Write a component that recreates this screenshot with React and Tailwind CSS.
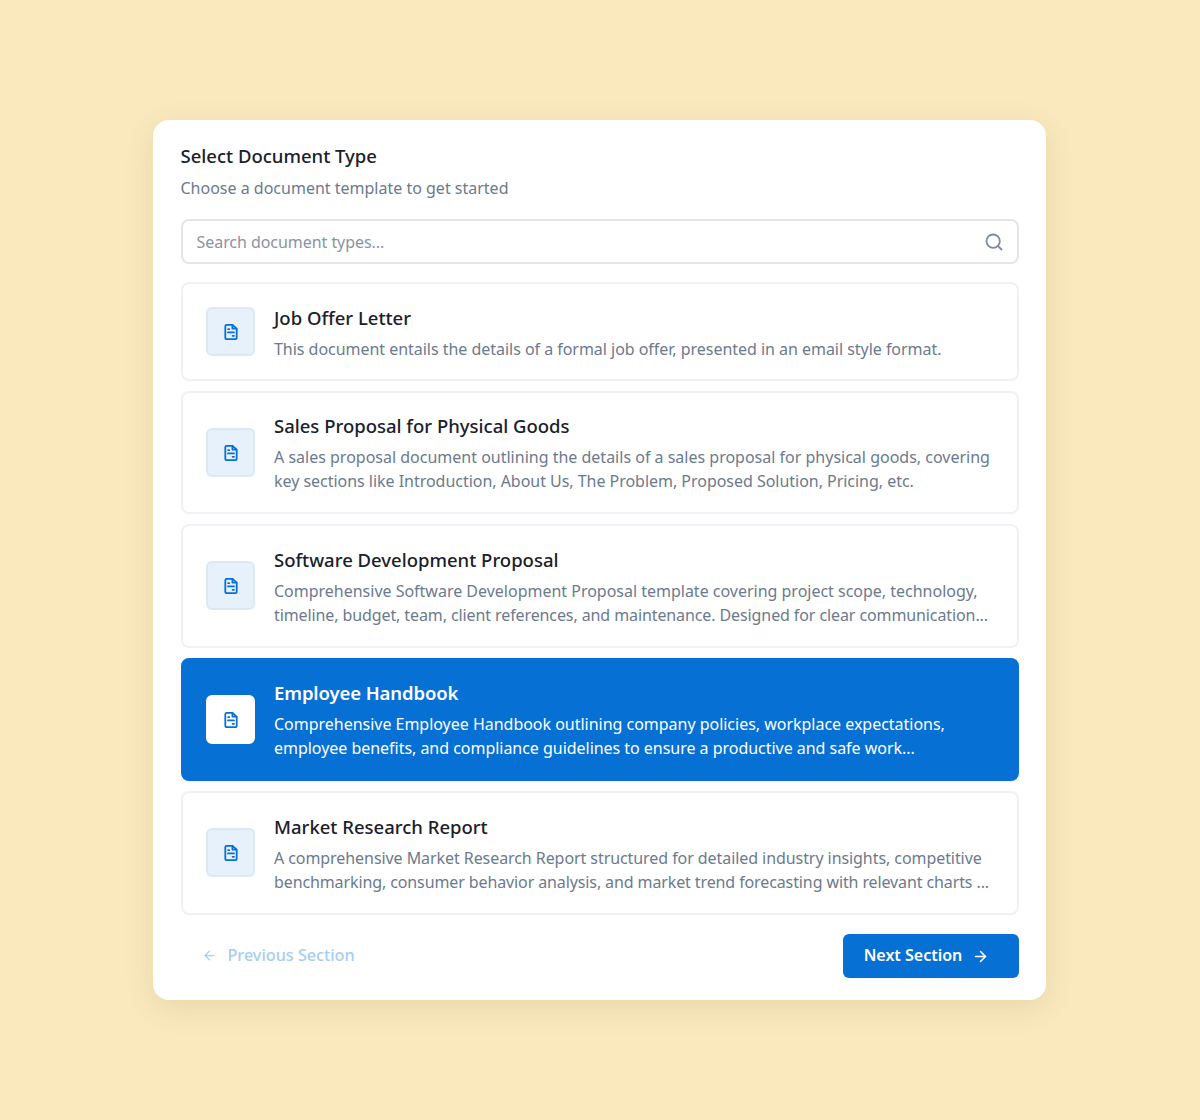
import React from "react";
import { Search, ArrowLeft, ArrowRight } from "lucide-react";

const items = [
  { t: "Job Offer Letter", d: [["This document entails the details of a formal job offer, presented in an email style format.", "tracking-[-0.03px]"]], h: "h-[99px]", nudge: "pt-[3px]" },
  { t: "Sales Proposal for Physical Goods", d: [["A sales proposal document outlining the details of a sales proposal for physical goods, covering", ""], ["key sections like Introduction, About Us, The Problem, Proposed Solution, Pricing, etc.", "tracking-[-0.03px]"]], h: "h-[123.5px]", nudge: "pt-[1px]" },
  { t: "Software Development Proposal", d: [["Comprehensive Software Development Proposal template covering project scope, technology,", "tracking-[-0.01px]"], ["timeline, budget, team, client references, and maintenance. Designed for clear communication...", "tracking-[-0.1px]"]], h: "h-[123.5px]", nudge: "pt-[2px]" },
  { t: "Employee Handbook", d: [["Comprehensive Employee Handbook outlining company policies, workplace expectations,", "tracking-[-0.02px]"], ["employee benefits, and compliance guidelines to ensure a productive and safe work...", "tracking-[-0.03px]"]], h: "h-[123.5px]", nudge: "pt-[2px]", active: true },
  { t: "Market Research Report", d: [["A comprehensive Market Research Report structured for detailed industry insights, competitive", "tracking-[-0.07px]"], ["benchmarking, consumer behavior analysis, and market trend forecasting with relevant charts ...", "tracking-[-0.11px]"]], h: "h-[123.5px]", nudge: "pt-[2px]" },
];

function DocIcon() {
  return (
    <svg className="ml-[2px] mt-[1px]" width="18" height="18" viewBox="0 0 18 18" fill="none" stroke="#0670d4" strokeWidth="1.8" strokeLinecap="round" strokeLinejoin="round">
      <path d="M10.5 1.8H4.8A1.5 1.5 0 0 0 3.3 3.3v11.4a1.5 1.5 0 0 0 1.5 1.5h8.4a1.5 1.5 0 0 0 1.5-1.5V5.6z" />
      <path d="M10.4 2v3.6h4" />
      <path d="M6.2 6.2h1" />
      <path d="M6 9.4h6" />
      <path d="M10.6 12.8h1.4" />
    </svg>
  );
}

function Row({ t, d, h, active, nudge }) {
  return (
    <div className={`${h} flex items-center rounded-[8px] border-2 pl-[23px] pr-[20px] ${active ? "bg-[#0670d4] border-[#0670d4]" : "bg-white border-[#f0f1f5]"}`}>
      <div className={`w-[49px] h-[49px] shrink-0 flex items-center justify-center rounded-[6px] border-2 ${active ? "bg-white border-white" : "bg-[#e6f1fb] border-[#dce8f4]"}`}>
        <DocIcon />
      </div>
      <div className={`ml-[19.5px] min-w-0 ${nudge}`}>
        <div className={`text-[18.5px] leading-[26px] whitespace-nowrap ${active ? "text-white font-semibold tracking-[-0.1px]" : "text-[#1a202c] font-medium"}`}>{t}</div>
        <div className={`mt-[6px] text-[16px] leading-[24px] whitespace-nowrap ${active ? "text-white" : "text-[#6c7a8e]"}`}>
          {d.map(([l, tr]) => <div key={l} className={tr}>{l}</div>)}
        </div>
      </div>
    </div>
  );
}

export default function App() {
  return (
    <div className="min-h-[1120px] bg-[#f9e9bd] flex items-start justify-center pt-[120px] pr-[2px] [font-family:'Noto_Sans',sans-serif]">
      <div className="w-[893px] h-[880px] bg-white rounded-[16px] shadow-[0_8px_30px_rgba(120,90,30,0.12)] pl-[28px] pr-[27px] pt-[22px]">
        <h1 className="text-[18.5px] leading-[28px] font-medium text-[#1a202c]">Select Document Type</h1>
        <p className="mt-[6px] text-[16px] leading-[24px] text-[#6c7a8e]">Choose a document template to get started</p>
        <div className="mt-[19px] h-[45px] flex items-center justify-between rounded-[8px] border-2 border-[#e2e6ec] pl-[14px] pr-[13px]">
          <span className="text-[16px] tracking-[-0.05px] text-[#8a93a3]">Search document types...</span>
          <Search size={20} strokeWidth={2.2} className="text-[#7d8ba1]" />
        </div>
        <div className="mt-[17.5px] flex flex-col gap-[10px]">
          {items.map((i) => <Row key={i.t} {...i} />)}
        </div>
        <div className="mt-[19.5px] flex items-center justify-between">
          <div className="flex items-center pl-[21px] text-[#a5cdf2]">
            <ArrowLeft size={15} strokeWidth={2} />
            <span className="ml-[11px] pb-[2px] text-[16.2px] font-medium">Previous Section</span>
          </div>
          <div className="w-[176px] h-[44px] flex items-center justify-center rounded-[6px] bg-[#0670d4] text-white pr-[8px]">
            <span className="pb-[2px] text-[16px] font-semibold">Next Section</span>
            <ArrowRight size={17} strokeWidth={2.2} className="ml-[10px]" />
          </div>
        </div>
      </div>
    </div>
  );
}
